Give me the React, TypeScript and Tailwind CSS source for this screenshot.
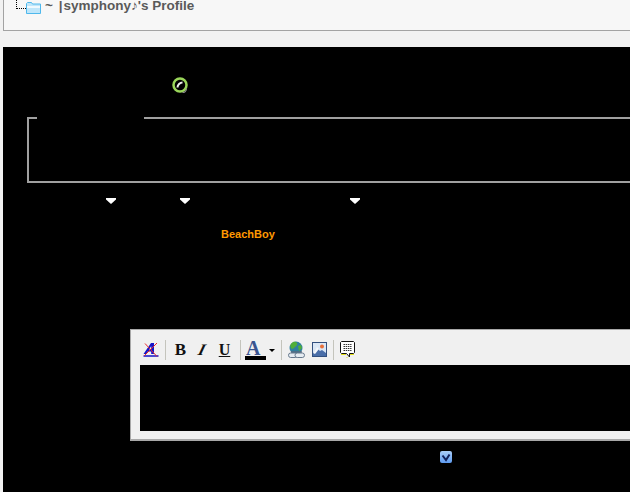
const arrowOffsets = ["ml-[103px]", "ml-[64px]", "ml-[160px]"];

function Arrow({ className }: { className: string }) {
  return (
    <svg width="10" height="6" viewBox="0 0 10 6" className={className}>
      <path d="M0 0h10v1.5L5 6 0 1.5z" fill="#fff" />
    </svg>
  );
}

function Separator() {
  return <div className="mx-[3px] h-[20px] w-px bg-[#c4c4bc]" />;
}

function RemoveFormatIcon() {
  return (
    <svg width="16" height="16" viewBox="0 0 16 16">
      <path d="M.5 12 8 1h3v11H8.200V9.500H4.800L3 12zM6 7.500h2.200V4z" fill="#1414c8" />
      <path d="M.5 14h15" stroke="#1414c8" strokeWidth="1.500" />
      <path d="M1 14 14 1M2 1.500l12 13" stroke="#e8282c" strokeWidth="1" />
    </svg>
  );
}

function LinkIcon() {
  return (
    <svg width="17" height="18" viewBox="0 0 17 18">
      <circle cx="8" cy="7" r="6.500" fill="#2f7f9f" />
      <path d="M3 3c2-3 5-2.500 6-1s-1 3-2 4-3 3-4 1-1-3 0-4zM10 5l3-1 1 3-3 3z" fill="#4fae3a" />
      <path d="M3 11h11" stroke="#5a6a80" strokeWidth="1.500" />
      <rect x="0.500" y="12" width="9" height="4.500" rx="2.200" fill="#e6ecf2" stroke="#66788c" />
      <rect x="7" y="12" width="9.500" height="4.500" rx="2.200" fill="#e6ecf2" stroke="#66788c" />
    </svg>
  );
}

function ImageIcon() {
  return (
    <svg width="15" height="15" viewBox="0 0 15 15">
      <rect x="0.500" y="0.500" width="14" height="14" fill="#dbe7f5" stroke="#33507f" />
      <path d="M1 14v-3l4-5 3 3 2-1 4 3v3z" fill="#4a6ea8" />
      <path d="M1 11l4-6 2 2-4 5z" fill="#f4f7fb" />
      <circle cx="10" cy="4.500" r="2" fill="#e8703a" />
    </svg>
  );
}

function CommentIcon() {
  return (
    <svg width="15" height="17" viewBox="0 0 15 17">
      <path d="M1.500.5h12l1 1v10l-1 1H9.500v3.500L6.500 12.500h-5l-1-1v-10z" fill="#fff" stroke="#111" />
      <path d="M3.500 3.500h8M3.500 5.500h8M3.500 7.500h8M3.500 9.500h8" stroke="#333" strokeDasharray="1.500 0.700" />
      <path d="M1 13.500h5M10 13.500h4M6.500 16.500h1" stroke="#e6e21c" />
    </svg>
  );
}

export default function App() {
  return (
    <div
      className="flex h-[492px] w-[630px] flex-col overflow-hidden bg-[#f2f2f2]"
      style={{ fontFamily: '"Liberation Sans", Arial, sans-serif' }}
    >
      {/* profile title bar, page is scrolled so it is cut at the top */}
      <div className="ml-[3px] flex h-[31px] shrink-0 items-start border-b border-l border-[#a3a3a3] bg-[#f7f7f7]">
        <div className="ml-[12px] h-[9px] w-[10px] border-b border-l border-dotted border-black" />
        <svg width="15" height="12" viewBox="0 0 15 12" className="mt-[2px]">
          <path d="M.5 11.500V1.500l1-1h4l1 1.500h8v9.500z" fill="#bfe6fa" stroke="#4fb8ec" />
          <path d="M1 5h13" stroke="#fff" strokeWidth="1.500" />
        </svg>
        <span className="-mt-[2px] ml-[4px] text-[13.500px] leading-[15px] font-bold whitespace-nowrap text-[#5a5a5a]">
          <span className="tracking-[1px]">~ |</span>symphony♪'s Profile
        </span>
      </div>

      <div className="mt-[16px] ml-[3px] flex min-h-0 flex-1 flex-col bg-black">
        {/* status icon */}
        <div className="mt-[30px] ml-[169px] h-[17px] w-[17px]">
          <svg width="17" height="17" viewBox="0 0 17 17">
            <circle cx="8" cy="8" r="6.500" fill="none" stroke="#9ad65a" strokeWidth="2.500" />
            <path d="M5.500 10.500c0-2.500 2.500-5 5-5" fill="none" stroke="#f0f0f0" strokeWidth="2" />
            <path d="M14.500 11.500c0 2.500-2 4-4 4" fill="none" stroke="#8a8a8a" strokeWidth="1.200" />
          </svg>
        </div>

        <fieldset className="mt-[23px] ml-[24px] h-[66px] border-2 border-r-0 border-[#a0a0a0] pl-[8px]">
          <legend className="h-[2px] w-[107px]" />
        </fieldset>

        <div className="mt-[15px] flex">
          {arrowOffsets.map((offset) => (
            <Arrow key={offset} className={offset} />
          ))}
        </div>

        <div className="mt-[24px] ml-[218px] text-[11px] leading-[13px] font-bold text-[#ff9900]">
          BeachBoy
        </div>

        {/* reply editor */}
        <div className="mt-[88px] ml-[127px] flex h-[112px] flex-col border-b-2 border-l border-t border-[#a8a8a8] bg-[#f0f0f0] pl-[9px]">
          <div className="flex h-[35px] shrink-0 items-center gap-[3px] pt-[4px] pl-[3px]">
            <RemoveFormatIcon />
            <Separator />
            <span className="w-[17px] text-center font-['Liberation_Serif'] text-[17px] leading-none font-bold text-[#111]">B</span>
            <span className="w-[20px] -skew-x-[25deg] text-center font-['Liberation_Serif'] text-[16px] leading-none font-bold text-[#111]">I</span>
            <span className="w-[19px] text-center font-['Liberation_Serif'] text-[16px] leading-none font-bold text-[#111] underline">U</span>
            <Separator />
            <div className="-ml-[2px] flex h-[20px] w-[21px] flex-col items-start">
              <span className="ml-[1px] h-[16px] font-['Liberation_Serif'] text-[20px] leading-[16px] font-bold text-[#3a5590]">A</span>
              <div className="h-[4px] w-[21px] bg-black" />
            </div>
            <div className="mt-[1px] h-0 w-0 border-x-[3px] border-t-[3px] border-x-transparent border-t-black" />
            <Separator />
            <LinkIcon />
            <div className="w-[1px]" />
            <ImageIcon />
            <Separator />
            <CommentIcon />
          </div>
          <div className="h-[66px] bg-black" />
        </div>

        <div className="mt-[10px] ml-[437px] flex h-[12px] w-[12px] items-center justify-center rounded-[2px] bg-gradient-to-b from-[#a9cdf8] to-[#5f9cf0]">
          <svg width="10" height="9" viewBox="0 0 10 9">
            <path d="M1.500 2.500 5 7l3.500-5.500" fill="none" stroke="#10205a" strokeWidth="2" />
          </svg>
        </div>
      </div>
    </div>
  );
}
